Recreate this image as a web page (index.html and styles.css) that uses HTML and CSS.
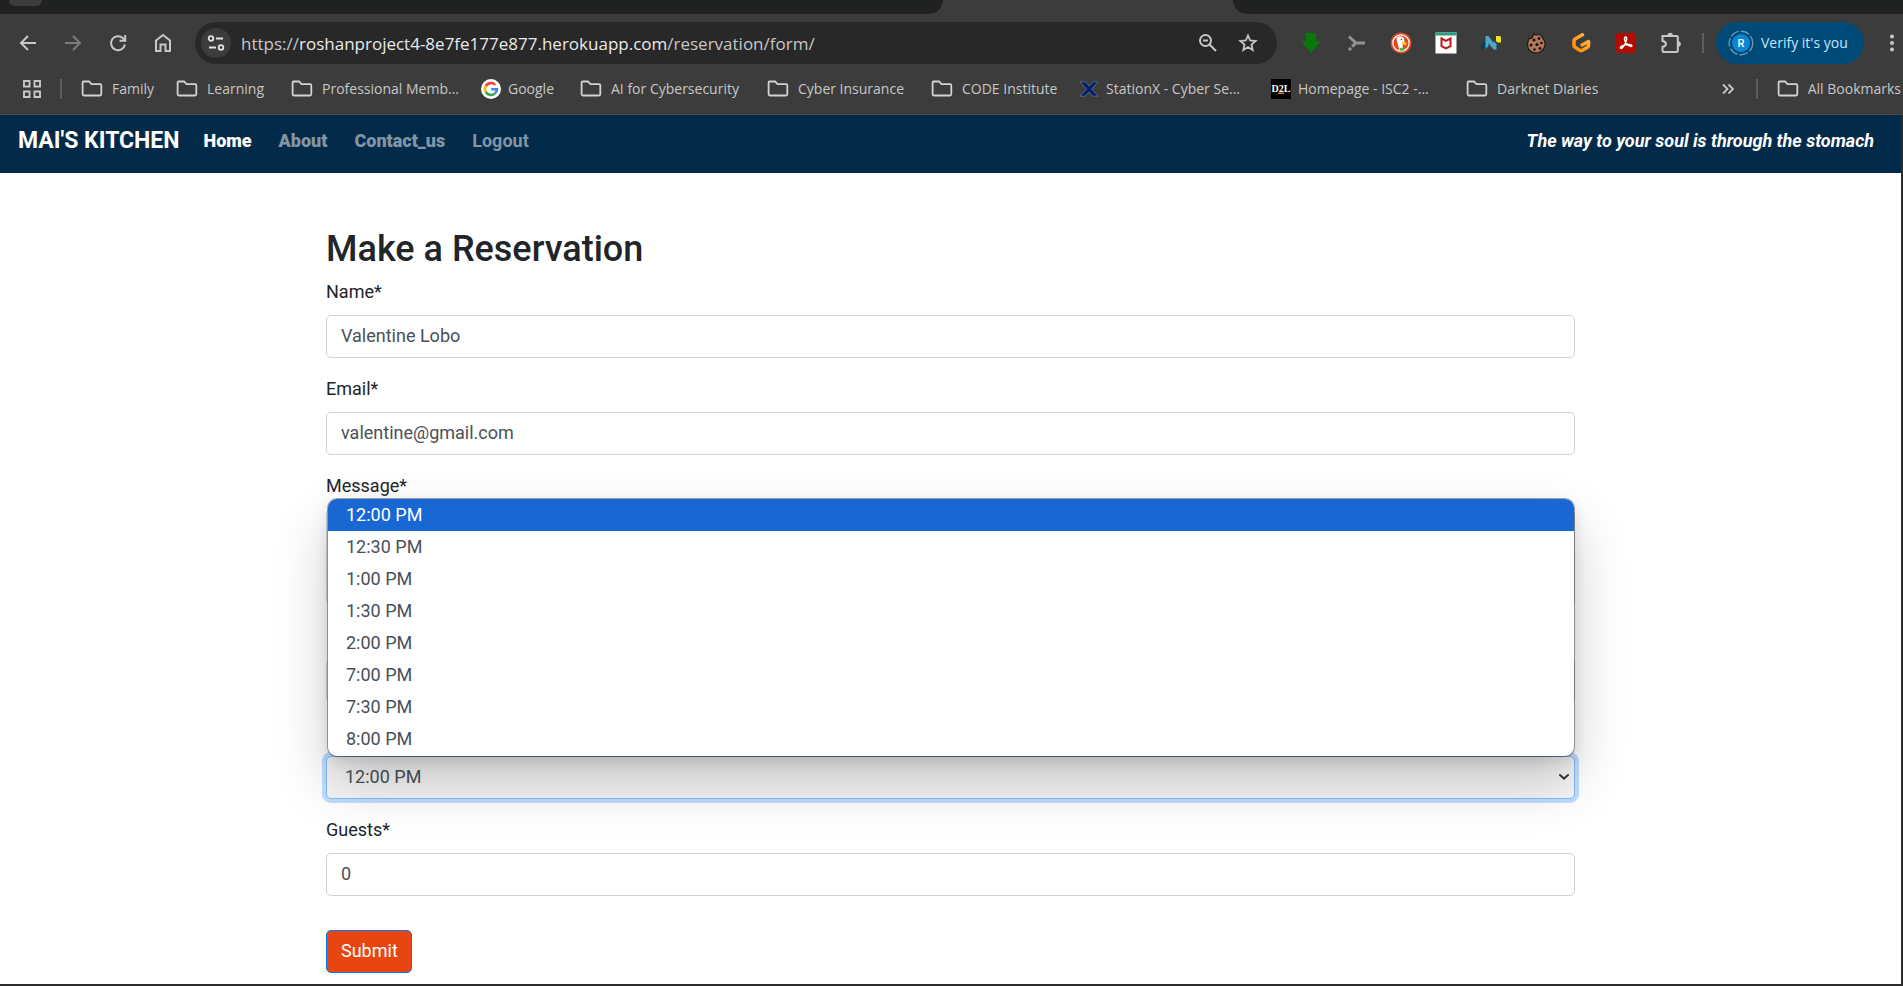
FILE: index.html
```html
<!DOCTYPE html>
<html lang="en">
<head>
<meta charset="utf-8">
<meta name="viewport" content="width=device-width, initial-scale=1">
<title>Mai's Kitchen - Make a Reservation</title>
<link rel="stylesheet" href="styles.css">
</head>
<body>
<svg class="defs" aria-hidden="true">
  <symbol id="folder" viewBox="0 0 22 18"><path d="M2.5 1.5h5.6l2.4 2.6h8.6q1.2 0 1.2 1.2v8.8q0 1.4-1.3 1.4H2.9q-1.3 0-1.3-1.4V2.7q0-1.2 .9-1.2z" fill="none" stroke="currentColor" stroke-width="1.8"/></symbol>
</svg>
<header class="browser">
  <div class="tabstrip">
    <div class="tabs-left"><span class="tab-search"></span></div>
    <div class="tab-active"></div>
    <div class="tabs-right"></div>
  </div>
  <div class="toolbar">
    <button class="tool" type="button" aria-label="Back"><svg width="18" height="18" viewBox="0 0 18 18"><path d="M17 9H2.5M9 2L2 9l7 7" fill="none" stroke="currentColor" stroke-width="2"/></svg></button>
    <button class="tool tool-off" type="button" aria-label="Forward"><svg width="18" height="18" viewBox="0 0 18 18"><path d="M1 9h14.500M9 2l7 7-7 7" fill="none" stroke="currentColor" stroke-width="2"/></svg></button>
    <button class="tool" type="button" aria-label="Reload"><svg width="18" height="18" viewBox="0 0 18 18"><path d="M15.900 10.500A7 7 0 1 1 14 4.200L16 6.200M16.200 1v5.700h-5.700" fill="none" stroke="currentColor" stroke-width="2"/></svg></button>
    <button class="tool" type="button" aria-label="Home"><svg width="18" height="20" viewBox="0 0 18 20"><path d="M2 7.500L9 2l7 5.500V18h-4.500v-6.500h-5V18H2z" fill="none" stroke="currentColor" stroke-width="2"/></svg></button>
    <div class="omnibox">
      <button class="site-info" type="button" aria-label="Site information"><svg width="18" height="16" viewBox="0 0 18 16"><g fill="none" stroke="currentColor" stroke-width="1.800"><circle cx="4" cy="3.500" r="2.300"/><path d="M9 3.500h7M2 12.500h7"/><circle cx="14" cy="12.500" r="2.300"/></g></svg></button>
      <div class="url"><span>https://</span><b>roshanproject4-8e7fe177e877.herokuapp.com</b><span>/reservation/form/</span></div>
      <button class="omni-btn" type="button" aria-label="Zoom"><svg width="20" height="20" viewBox="0 0 20 20"><g fill="none" stroke="currentColor" stroke-width="2"><circle cx="7.500" cy="7.500" r="5.500"/><path d="M5 7.500h5M11.500 11.500l6.500 6.500"/></g></svg></button>
      <button class="omni-btn" type="button" aria-label="Bookmark this page"><svg width="20" height="20" viewBox="0 0 20 20"><path d="M10 2.500l2.200 5 5.400 .5-4.100 3.600 1.200 5.400-4.700-2.900L5.300 17l1.200-5.400L2.400 8l5.400-.5z" fill="none" stroke="currentColor" stroke-width="1.800"/></svg></button>
    </div>
    <div class="extensions">
      <button class="tool" type="button" aria-label="Downloader"><svg width="22" height="22" viewBox="0 0 22 22"><path d="M6 1h10v8h5L11 21 1 9h5z" fill="#087808"/></svg></button>
      <button class="tool" type="button" aria-label="Branch"><svg width="20" height="20" viewBox="0 0 20 20"><g fill="none" stroke="#929292" stroke-width="3"><path d="M19 10h-9L3 3.500M9 11l-3 2.500"/></g><circle cx="4" cy="16" r="1.800" fill="#929292"/></svg></button>
      <button class="tool" type="button" aria-label="DuckDuckGo"><svg width="22" height="22" viewBox="0 0 22 22"><circle cx="11" cy="11" r="10.500" fill="#de4a25"/><circle cx="11" cy="11" r="8.200" fill="none" stroke="#fff" stroke-width="1.200"/><path d="M7 5q4-2 7 1l.5 5-2 1 .6 6-3.600.8L7 9q-1-2 0-4z" fill="#fff"/><path d="M12 9.500l5 1.200-1 1.400 1 1.200-5-.8z" fill="#fc3"/><path d="M9.500 16l5-.5-.5 3-4 .5z" fill="#4cba3c"/><circle cx="11.500" cy="7.500" r=".8" fill="#2d4f8e"/></svg></button>
      <button class="tool" type="button" aria-label="McAfee"><svg width="22" height="22" viewBox="0 0 22 22"><path d="M.5 .5h21v21H.5z" fill="#fff"/><path d="M.5 .5h21v3H.5z" fill="#2a9d86"/><path d="M6.500 6.500l4.500 2.300 4.500-2.300v7.700L11 16.500l-4.500-2.300z" fill="none" stroke="#c01818" stroke-width="2"/></svg></button>
      <button class="tool" type="button" aria-label="Notes"><svg width="22" height="22" viewBox="0 0 22 22"><path d="M.5 12L5 9.500V17H3q-2.500 0-2.500-2.500z" fill="#0b4054"/><path d="M5.500 4h3l5 7V9l3 3v5.500h-3L8.500 11v3l-3 3z" fill="#48a9cc"/><path d="M16 4h3.500q1.500 0 1.500 1.500v5h-3.500L16 9z" fill="#f0e51c"/></svg></button>
      <button class="tool" type="button" aria-label="Cookies"><svg width="20" height="22" viewBox="0 0 20 22"><path d="M8 1.500Q9 4 11.500 2.500q4 0 5 3.500 3 3 2.500 7-1.500 7.500-9 8-8-.5-8.500-8.500Q2 9 3 7l3-1z" fill="#b6785a" stroke="#241812" stroke-width="1.200"/><g fill="#15100e"><circle cx="8" cy="8" r="1.500"/><circle cx="13" cy="6.500" r="1.400"/><circle cx="5" cy="13" r="1.500"/><circle cx="11" cy="12.500" r="1.600"/><circle cx="15.500" cy="11" r="1.300"/><circle cx="8.500" cy="17.500" r="1.300"/><circle cx="14" cy="16.500" r="1.400"/></g></svg></button>
      <button class="tool" type="button" aria-label="Gitpod"><svg width="20" height="22" viewBox="0 0 20 22"><defs><linearGradient id="gp" x1="1" y1="0" x2="0" y2="1"><stop offset="0" stop-color="#ffb84a"/><stop offset="1" stop-color="#ff8a00"/></linearGradient></defs><path d="M11.500 2.800L4 7q-1 .5-1 1.500v5q0 1.200 1 1.700l5 3.300q1 .5 2 0l5.500-3.300q1-.5 1-1.700V9.500L11 13" fill="none" stroke="url(#gp)" stroke-width="3.600" stroke-linecap="round" stroke-linejoin="round"/></svg></button>
      <button class="tool" type="button" aria-label="Adobe Acrobat"><svg width="20" height="20" viewBox="0 0 20 20"><rect width="20" height="20" rx="3" fill="#b30b00"/><path d="M9.500 4q1.600 0 .9 3.200-1.300 4.600-4 7.500-1.200 1.300-2 .3 0-1.700 4.600-2.900 4-1 6.500 .1 1 1-.5 1.300-2.300 0-4.500-3Q8.300 7.300 8.400 5.500 8.600 4 9.500 4z" fill="none" stroke="#fff" stroke-width="1.500"/></svg></button>
      <button class="tool" type="button" aria-label="Extensions"><svg width="22" height="22" viewBox="0 0 22 22"><path d="M2.500 4h14.300q1 0 1 1v14q0 1-1 1H3.500q-1 0-1-1v-4.200q3.400-.5 3.400-2.900T2.500 9z" fill="none" stroke="currentColor" stroke-width="2"/><path d="M7.500 3.500a2.700 2.700 0 0 1 5.400 0zM18 9.300a2.800 2.800 0 0 1 0 5.600z" fill="currentColor"/></svg></button>
    </div>
    <span class="divider"></span>
    <button class="profile" type="button"><svg width="26" height="26" viewBox="0 0 26 26" aria-hidden="true"><circle cx="13" cy="13" r="11.800" fill="none" stroke="#6c93a9" stroke-width="1.400" stroke-dasharray="9 2"/><circle cx="13" cy="13" r="9" fill="#0b86d6"/><text x="13" y="17" class="avatar-letter">R</text></svg><span>Verify it's you</span></button>
    <button class="kebab" type="button" aria-label="Menu"><svg width="6" height="18" viewBox="0 0 6 18"><g fill="currentColor"><circle cx="3" cy="2.500" r="2"/><circle cx="3" cy="9" r="2"/><circle cx="3" cy="15.500" r="2"/></g></svg></button>
  </div>
  <div class="bookmarks">
    <button class="apps" type="button" aria-label="Apps"><svg width="18" height="18" viewBox="0 0 18 18"><path d="M1 1h5.500v5.500H1zM11.500 1H17v5.500h-5.500zM1 11.500h5.500V17H1zM11.500 11.500H17V17h-5.500z" fill="none" stroke="currentColor" stroke-width="1.900"/></svg></button>
    <span class="divider"></span>
    <nav class="marks" aria-label="Bookmarks">
      <a href="#"><svg class="folder"><use href="#folder"/></svg>Family</a>
      <a href="#"><svg class="folder"><use href="#folder"/></svg>Learning</a>
      <a href="#"><svg class="folder"><use href="#folder"/></svg>Professional Memb...</a>
      <a href="#" class="site"><svg width="20" height="20" viewBox="0 0 20 20"><circle cx="10" cy="10" r="10" fill="#fff"/><g fill="none" stroke-width="2.600"><path d="M14.200 5.800A6 6 0 0 0 4.800 7" stroke="#ea4335"/><path d="M4.800 7a6 6 0 0 0 0 6" stroke="#fbbc05"/><path d="M4.800 13a6 6 0 0 0 9.200 1.400" stroke="#34a853"/><path d="M14 14.400a6 6 0 0 0 2-4.200h-5.800" stroke="#4285f4"/></g></svg>Google</a>
      <a href="#"><svg class="folder"><use href="#folder"/></svg>AI for Cybersecurity</a>
      <a href="#"><svg class="folder"><use href="#folder"/></svg>Cyber Insurance</a>
      <a href="#"><svg class="folder"><use href="#folder"/></svg>CODE Institute</a>
      <a href="#" class="site"><svg width="20" height="16" viewBox="0 0 20 16"><path d="M.8 .8h5.500l4 4.400 4-4.400h5L12.500 8l6.800 7.200h-5.500L10 11l-3.800 4.200H.8L7.500 8z" fill="#00206e" stroke="#6d7686" stroke-width=".8"/></svg>StationX - Cyber Se...</a>
      <a href="#" class="site"><svg width="20" height="20" viewBox="0 0 20 20"><path d="M0 0h20v20H0z" fill="#000"/><path d="M7 13.500h6V15H7z" fill="#e87511"/><text x="10" y="13" class="d2l">D2L</text></svg>Homepage - ISC2 -...</a>
      <a href="#"><svg class="folder"><use href="#folder"/></svg>Darknet Diaries</a>
    </nav>
    <button class="more" type="button" aria-label="More bookmarks"><svg width="12" height="12" viewBox="0 0 12 12"><path d="M1 1.500L5.500 6 1 10.500M6.500 1.500L11 6l-4.500 4.500" fill="none" stroke="currentColor" stroke-width="1.800"/></svg></button>
    <span class="divider"></span>
    <a href="#" class="all"><svg class="folder"><use href="#folder"/></svg>All Bookmarks</a>
  </div>
</header>
<div class="page">
  <nav class="navbar" aria-label="Main">
    <a class="brand" href="#">MAI'S KITCHEN</a>
    <div class="links">
      <a class="link link-on" href="#">Home</a>
      <a class="link" href="#">About</a>
      <a class="link" href="#">Contact_us</a>
      <a class="link link-soft" href="#">Logout</a>
    </div>
    <em class="motto">The way to your soul is through the stomach</em>
  </nav>
  <main class="content">
    <h1>Make a Reservation</h1>
    <form>
      <div class="group"><label for="name">Name*</label><input class="control" id="name" type="text" value="Valentine Lobo"></div>
      <div class="group"><label for="email">Email*</label><input class="control" id="email" type="email" value="valentine@gmail.com"></div>
      <div class="group"><label for="message">Message*</label><textarea class="control message" id="message"></textarea></div>
      <div class="group group-bare"><input class="control" type="text" aria-label="Date"></div>
      <div class="group group-bare">
        <div class="picker">
          <select class="control select" aria-label="Time"><option>12:00 PM</option><option>12:30 PM</option><option>1:00 PM</option><option>1:30 PM</option><option>2:00 PM</option><option>7:00 PM</option><option>7:30 PM</option><option>8:00 PM</option></select>
          <svg class="chevron" width="10" height="6" viewBox="0 0 10 6" aria-hidden="true"><path d="M1 1l4 3.600L9 1" fill="none" stroke="#343a40" stroke-width="2" stroke-linecap="round"/></svg>
          <ul class="options" role="listbox" aria-label="Time">
            <li role="option" aria-selected="true" class="chosen">12:00 PM</li>
            <li role="option">12:30 PM</li>
            <li role="option">1:00 PM</li>
            <li role="option">1:30 PM</li>
            <li role="option">2:00 PM</li>
            <li role="option">7:00 PM</li>
            <li role="option">7:30 PM</li>
            <li role="option">8:00 PM</li>
          </ul>
        </div>
      </div>
      <div class="group"><label for="guests">Guests*</label><input class="control" id="guests" type="text" inputmode="numeric" value="0"></div>
      <button class="submit" type="submit">Submit</button>
    </form>
  </main>
</div>
</body>
</html>
```
FILE: styles.css
```css
*, *::before, *::after { box-sizing: border-box; }

body {
  margin: 0;
  min-height: 100vh;
  display: flex;
  flex-direction: column;
  background: #fff;
  font-family: Roboto, "Liberation Sans", sans-serif;
  font-size: 18px;
  line-height: 27px;
  color: #212529;
}

a { color: inherit; text-decoration: none; }
button { font: inherit; color: inherit; border: 0; padding: 0; background: none; cursor: pointer; }
svg { flex: none; }
.defs { display: none; }

/* Browser chrome */
.browser {
  background: #3c3c3c;
  border-bottom: 1px solid #4a4c4b;
  color: #c7c7c7;
  font-family: "Open Sans", "Noto Sans", sans-serif;
  font-size: 14px;
  line-height: 20px;
  overflow: hidden;
}

.tabstrip { display: flex; height: 14px; }
.tabs-left { width: 943px; background: #202221; border-bottom-right-radius: 14px; }
.tab-active { width: 290px; }
.tabs-right { flex: 1; background: #202221; border-bottom-left-radius: 14px; }
.tab-search {
  display: block;
  width: 33px;
  height: 6px;
  margin-left: 9px;
  background: #3c3c3c;
  border-radius: 0 0 12px 12px;
}

.toolbar { display: flex; align-items: center; height: 58px; padding: 0 4px 0 5px; }
.tool { display: flex; align-items: center; justify-content: center; width: 45px; height: 42px; flex: none; }
.tool-off { color: #7b7b7b; }

.omnibox {
  flex: 1;
  min-width: 0;
  display: flex;
  align-items: center;
  height: 42px;
  margin: 0 11px 0 10px;
  padding: 0 9px 0 6px;
  border-radius: 21px;
  background: #282828;
}
.site-info { display: flex; align-items: center; justify-content: center; width: 30px; height: 30px; border-radius: 50%; background: #3c3c3c; flex: none; color: #e3e3e3; }
.url { flex: 1; min-width: 0; margin-left: 10px; padding-top: 2px; font-size: 17px; line-height: 24px; white-space: nowrap; overflow: hidden; }
.url b { font-weight: 400; color: #eaeaea; }
.omni-btn { display: flex; align-items: center; justify-content: center; width: 40px; height: 40px; }

.extensions { display: flex; }
.divider { width: 2px; height: 20px; background: #5e5e5e; flex: none; }
.toolbar .divider { margin: 0 12px 0 9px; }
.profile {
  display: flex;
  align-items: center;
  gap: 7px;
  width: 148px;
  height: 42px;
  padding: 0 12px;
  border-radius: 21px;
  background: #004a77;
  color: #c2e7ff;
  white-space: nowrap;
}
.avatar-letter { font: 500 11px Roboto, sans-serif; fill: #fff; text-anchor: middle; }
.kebab { display: flex; justify-content: center; width: 15px; margin-left: 20px; flex: none; }

.bookmarks { display: flex; align-items: center; height: 34px; margin-bottom: 8px; white-space: nowrap; }
.bookmarks a { display: flex; align-items: center; gap: 9px; }
.bookmarks .site { gap: 7px; }
.folder { width: 22px; height: 18px; color: #d2d2d2; }
.apps { display: flex; margin: 0 19px 0 23px; }
.marks {
  flex: 1;
  min-width: 0;
  display: grid;
  grid-template-columns: 95px 115px 190px 99px 187px 164px 148px 192px 195px auto;
  margin-left: 19px;
}
.more { display: flex; margin-right: 22px; }
.bookmarks .all { margin-left: 19px; margin-right: 2px; }
.d2l { font: bold 10px "Liberation Serif", serif; fill: #fff; text-anchor: middle; }

/* Site */
.page { flex: 1; border-right: 2px solid #2b2b2b; border-bottom: 2px solid #2b2b2b; }
.navbar {
  display: flex;
  align-items: center;
  gap: 24px;
  padding: 12px 27px 19px 18px;
  background: #032b49;
  color: #fff;
  font-weight: 700;
}
.brand { font-size: 23px; }
.links { display: flex; gap: 27px; }
.link { color: #8195a4; font-weight: 900; }
.link-on { color: #fff; }
.link-soft { font-weight: 700; }
.motto { margin-left: auto; }

.content { max-width: 1249px; margin: 0 auto; padding: 55px 0 11px; }
h1 { margin: 0 0 7px; font-size: 36px; line-height: 43px; font-weight: 500; }
.group { margin-bottom: 17px; }
.group label { display: block; margin-bottom: 10px; }
.group-bare { padding-top: 37px; }
.control {
  display: block;
  width: 100%;
  height: 43px;
  padding: 5px 14px 7px;
  border: 1px solid #ced4da;
  border-radius: 5px;
  background: #fff;
  color: #495057;
  font: inherit;
}
.message { height: 96px; resize: none; }

.picker { position: relative; }
.select {
  appearance: none;
  padding: 5px 18px 7px;
  border-color: #80bdff;
  background: #f6f6f6;
  box-shadow: 0 0 0 4px rgba(0, 123, 255, .25);
}
.chevron { position: absolute; right: 6px; top: 18px; }
.options {
  position: absolute;
  left: 2px;
  right: 1px;
  bottom: 100%;
  margin: 0;
  padding: 0 0 1px;
  list-style: none;
  overflow: hidden;
  background: #fff;
  border-radius: 9px;
  box-shadow: 0 0 0 1px rgba(0, 0, 0, .35), 0 6px 14px rgba(0, 0, 0, .12), 0 26px 56px rgba(0, 0, 0, .2);
}
.options li { padding: 0 18px; line-height: 32px; color: #495057; }
.options .chosen { background: #1967d2; color: #fff; }

.submit {
  margin-top: 17px;
  padding: 6px 13px 8px 14px;
  border: 1px solid #007bff;
  border-radius: 5px;
  background: #e84610;
  color: #fff;
}
```
